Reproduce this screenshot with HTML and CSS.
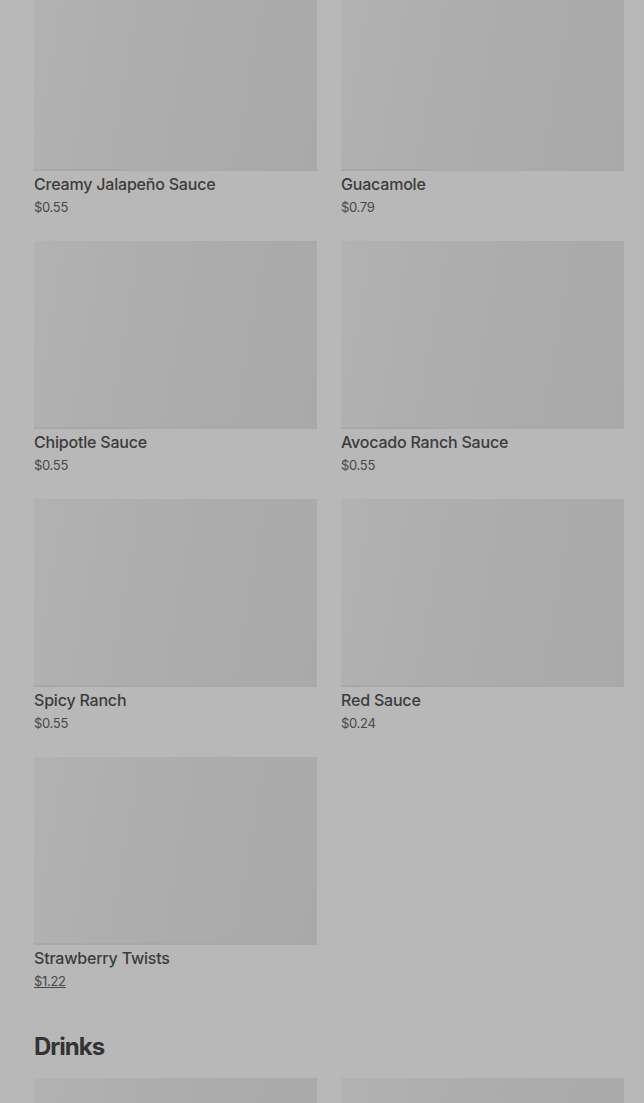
FILE: index.html
```html
<!DOCTYPE html>
<html lang="en">
<head>
    <meta charset="UTF-8">
    <title>Menu</title>
    <link rel="stylesheet" href="styles.css">
</head>
<body>
<div class="menu">
    <div class="grid first">
        <div class="item">
            <div class="pic"></div>
            <div class="name">Creamy Jalapeño Sauce</div>
            <div class="price">$0.55</div>
        </div>
        <div class="item">
            <div class="pic"></div>
            <div class="name">Guacamole</div>
            <div class="price">$0.79</div>
        </div>
        <div class="item">
            <div class="pic"></div>
            <div class="name">Chipotle Sauce</div>
            <div class="price">$0.55</div>
        </div>
        <div class="item">
            <div class="pic"></div>
            <div class="name">Avocado Ranch Sauce</div>
            <div class="price">$0.55</div>
        </div>
        <div class="item">
            <div class="pic"></div>
            <div class="name">Spicy Ranch</div>
            <div class="price">$0.55</div>
        </div>
        <div class="item">
            <div class="pic"></div>
            <div class="name">Red Sauce</div>
            <div class="price">$0.24</div>
        </div>
        <div class="item">
            <div class="pic"></div>
            <div class="name">Strawberry Twists</div>
            <div class="price under">$1.22</div>
        </div>
    </div>

    <h2 class="section">Drinks</h2>

    <div class="grid">
        <div class="item">
            <div class="pic"></div>
        </div>
        <div class="item">
            <div class="pic"></div>
        </div>
    </div>
</div>
</body>
</html>
```

FILE: styles.css
```css
*{
    padding: 0;
    margin: 0;
    box-sizing: border-box;
}

html, body{
    background: #b8b8b8;
    overflow: hidden;
}

body{
    font-family: Inter, "Liberation Sans", sans-serif;
    color: #3c3c3c;
}

.menu{
    padding: 0 20px 0 34px;
}

.grid{
    display: grid;
    grid-template-columns: 283px 283px;
    column-gap: 24px;
    row-gap: 26px;
}

/* page is scrolled a bit, first row is cut off */
.grid.first{
    margin-top: -17px;
}

.pic{
    height: 188px;
    background: linear-gradient(100deg, #b2b2b2 0%, #adadad 40%, #a9a9a9 100%);
    border-bottom: 2px solid #a8a8a8;
}

.name{
    margin-top: 3px;
    font-size: 16px;
    font-weight: 500;
    line-height: 20px;
    letter-spacing: -0.2px;
}

.price{
    margin-top: 5px;
    font-size: 13px;
    line-height: 16px;
    color: #484848;
    letter-spacing: -0.3px;
}

.under{
    text-decoration: underline;
}

.section{
    margin: 42px 0 15px;
    font-size: 24px;
    line-height: 32px;
    font-weight: 700;
    letter-spacing: -1px;
    color: #333;
}
```
